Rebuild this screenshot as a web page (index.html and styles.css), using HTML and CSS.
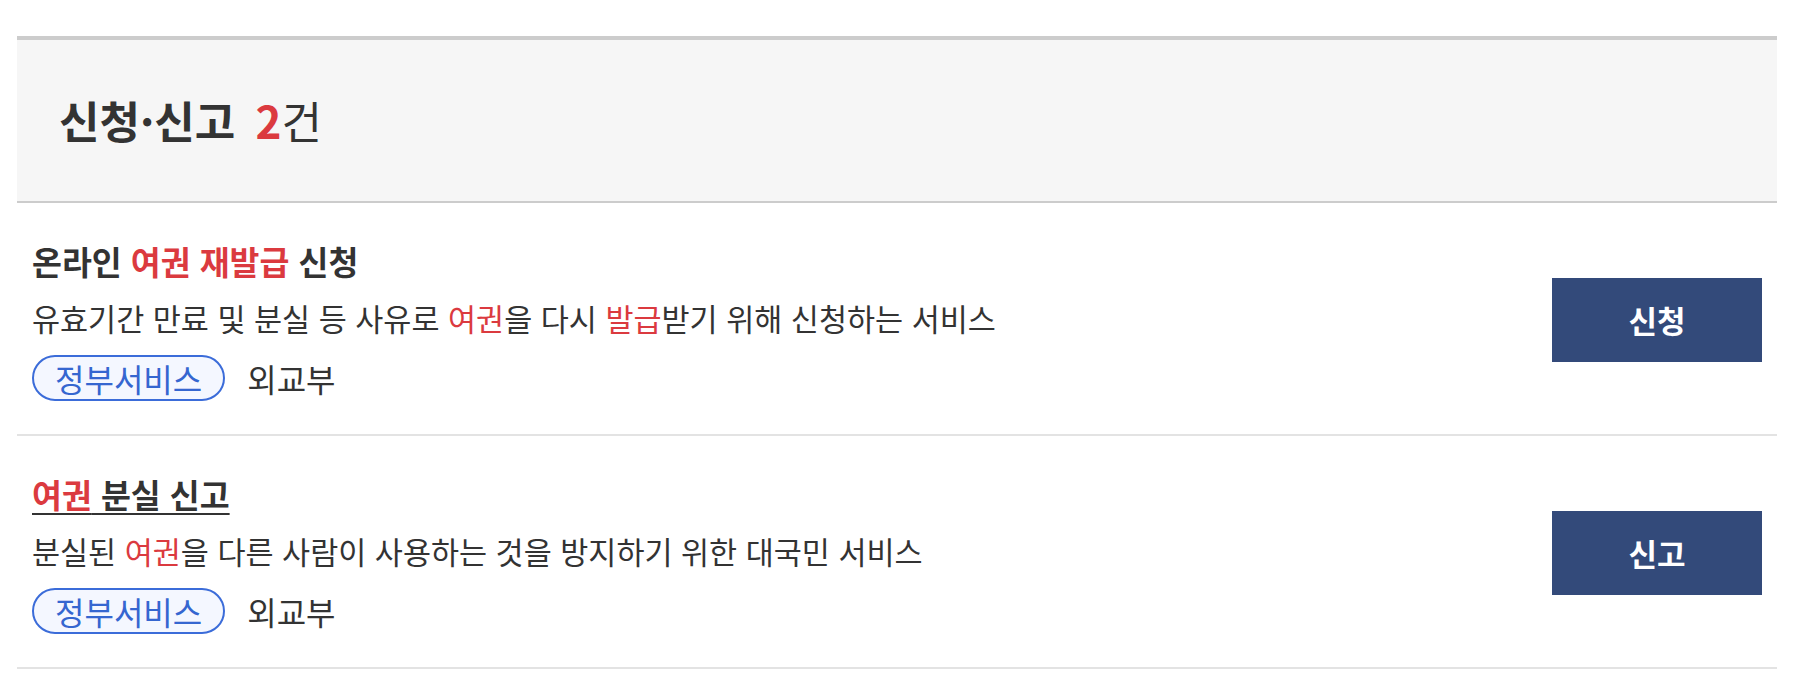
FILE: index.html
```html
<!DOCTYPE html>
<html lang="ko">
<head>
<meta charset="utf-8">
<title>신청·신고</title>
<link rel="stylesheet" href="styles.css">
</head>
<body>
<section class="result">
  <header class="result-head">
    <h2 class="result-title">신청·신고 <span class="count"><em>2</em>건</span></h2>
  </header>
  <ul class="list">
    <li class="item">
      <div class="info">
        <p class="item-title">온라인 <span class="hl">여권 재발급</span> 신청</p>
        <p class="desc">유효기간 만료 및 분실 등 사유로 <span class="hl">여권</span>을 다시 <span class="hl">발급</span>받기 위해 신청하는 서비스</p>
        <div class="meta"><span class="tag">정부서비스</span><span class="org">외교부</span></div>
      </div>
      <a class="btn" href="#">신청</a>
    </li>
    <li class="item">
      <div class="info">
        <p class="item-title"><a class="title-link" href="#"><span class="hl">여권</span> 분실 신고</a></p>
        <p class="desc">분실된 <span class="hl">여권</span>을 다른 사람이 사용하는 것을 방지하기 위한 대국민 서비스</p>
        <div class="meta"><span class="tag">정부서비스</span><span class="org">외교부</span></div>
      </div>
      <a class="btn" href="#">신고</a>
    </li>
  </ul>
</section>
</body>
</html>
```
FILE: styles.css
```css
* { box-sizing: border-box; }
html, body { margin: 0; padding: 0; background: #fff; }
body {
  font-family: "Noto Sans CJK KR", "Noto Sans", sans-serif;
  color: #333;
}
.result {
  margin: 36px 21px 0 17px;
}
.result-head {
  background: #f6f6f6;
  border-top: 4px solid #cccccc;
  border-bottom: 2px solid #cccccc;
  padding: 49px 42px;
}
.result-title {
  margin: 0;
  font-size: 44px;
  line-height: 63px;
  font-weight: 700;
  color: #333;
}
.count { margin-left: 8px; font-weight: 400; }
.count em { font-style: normal; font-weight: 700; color: #db3a3f; }
.list { list-style: none; margin: 0; padding: 0; }
.item {
  display: flex;
  align-items: center;
  justify-content: space-between;
  padding: 35px 15px 33px 15px;
  border-bottom: 2px solid #e3e3e3;
}
.item + .item { padding-top: 35px; padding-bottom: 33px; }
.info { display: flex; flex-direction: column; align-items: flex-start; }
.item-title {
  margin: 0;
  font-size: 32.5px;
  line-height: 45px;
  font-weight: 700;
  color: #333;
}
.title-link { color: #333; text-decoration: underline; text-decoration-thickness: 2px; text-underline-offset: 5px; }
.hl { color: #db3a3f; }
.desc {
  margin: 14px 0 0;
  font-size: 30.5px;
  line-height: 43px;
  color: #333;
}
.meta {
  margin-top: 15px;
  display: flex;
  align-items: center;
  gap: 22px;
}
.tag {
  display: inline-flex;
  align-items: center;
  height: 46px;
  padding: 0 21px;
  border: 2px solid #3b6cd9;
  border-radius: 23px;
  background: #f4f7ff;
  color: #3566d0;
  font-size: 32px;
  line-height: 1;
}
.org { font-size: 32px; line-height: 46px; color: #333; }
.btn {
  flex: none;
  width: 210px;
  height: 84px;
  display: flex;
  align-items: center;
  justify-content: center;
  background: #334a7a;
  color: #fff;
  font-size: 31px;
  font-weight: 700;
  text-decoration: none;
}
```
